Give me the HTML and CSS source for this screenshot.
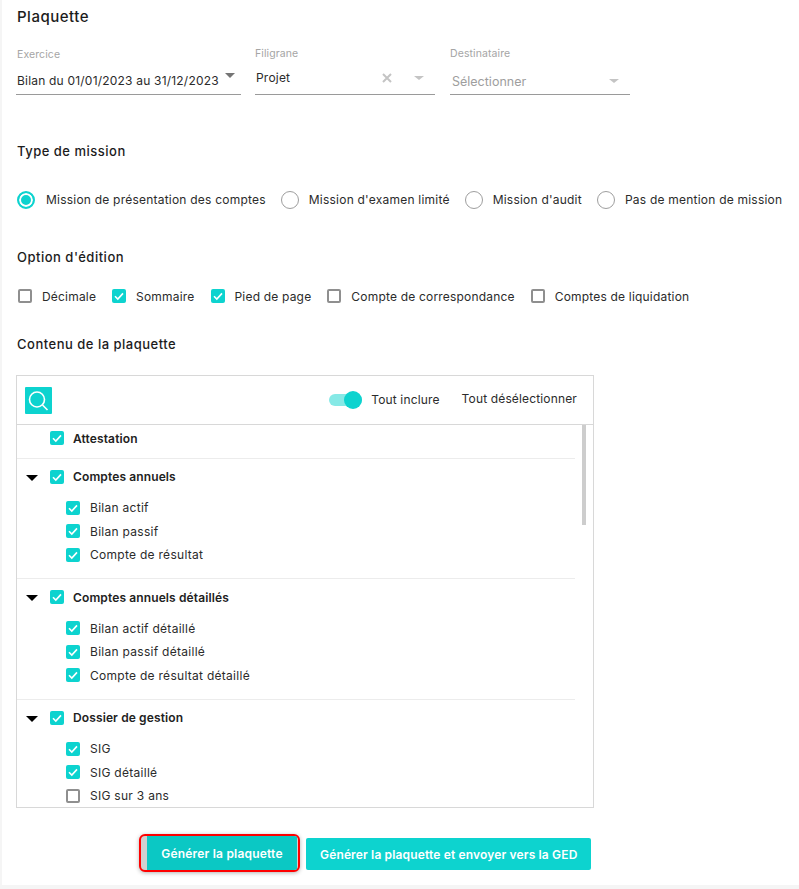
FILE: index.html
```html
<!DOCTYPE html>
<html lang="fr">
<head>
<meta charset="utf-8">
<title>Plaquette</title>
<link rel="stylesheet" href="styles.css">
</head>
<body>
<main class="page">
  <h1 class="title">Plaquette</h1>

  <div class="fields">
    <div class="field field-year">
      <span class="field-label">Exercice</span>
      <div class="field-control">
        <span class="field-value">Bilan du 01/01/2023 au 31/12/2023</span>
        <span class="caret caret-dark"></span>
      </div>
    </div>
    <div class="field field-wm">
      <span class="field-label">Filigrane</span>
      <div class="field-control">
        <span class="field-value">Projet</span>
        <svg class="clear" viewBox="0 0 10 10" width="10" height="10"><path d="M1 1L9 9M9 1L1 9" stroke="#c4c4c4" stroke-width="2" fill="none"/></svg>
        <span class="caret caret-light"></span>
      </div>
    </div>
    <div class="field field-dest">
      <span class="field-label">Destinataire</span>
      <div class="field-control">
        <span class="field-placeholder">Sélectionner</span>
        <span class="caret caret-light"></span>
      </div>
    </div>
  </div>

  <h2 class="section section-mission">Type de mission</h2>
  <div class="radios">
    <label class="radio"><span class="radio-dot is-on"></span>Mission de présentation des comptes</label>
    <label class="radio"><span class="radio-dot"></span>Mission d'examen limité</label>
    <label class="radio"><span class="radio-dot"></span>Mission d'audit</label>
    <label class="radio"><span class="radio-dot"></span>Pas de mention de mission</label>
  </div>

  <h2 class="section section-option">Option d'édition</h2>
  <div class="options">
    <label class="option"><span class="check"></span>Décimale</label>
    <label class="option"><span class="check is-on"><svg viewBox="0 0 14 14"><path d="M3 7.2L5.8 10L11 4.4"/></svg></span>Sommaire</label>
    <label class="option"><span class="check is-on"><svg viewBox="0 0 14 14"><path d="M3 7.2L5.8 10L11 4.4"/></svg></span>Pied de page</label>
    <label class="option"><span class="check"></span>Compte de correspondance</label>
    <label class="option"><span class="check"></span>Comptes de liquidation</label>
  </div>

  <h2 class="section section-content">Contenu de la plaquette</h2>
  <section class="panel">
    <header class="panel-head">
      <button class="search" type="button" aria-label="Rechercher">
        <svg viewBox="0 0 27 27" width="27" height="27"><circle cx="12" cy="12.5" r="7.5" fill="none" stroke="#fff" stroke-width="1.6"/><path d="M17.5 18L22.5 23" stroke="#fff" stroke-width="1.6" fill="none"/></svg>
      </button>
      <span class="toggle"><span class="toggle-knob"></span></span>
      <span class="include">Tout inclure</span>
      <span class="deselect">Tout désélectionner</span>
    </header>
    <div class="tree">
      <div class="scrollbar"></div>
      <div class="tree-top">
        <span class="check is-on"><svg viewBox="0 0 14 14"><path d="M3 7.2L5.8 10L11 4.4"/></svg></span>
        <span class="node-name">Attestation</span>
      </div>
      <div class="group">
        <div class="group-head">
          <span class="arrow"></span>
          <span class="check is-on"><svg viewBox="0 0 14 14"><path d="M3 7.2L5.8 10L11 4.4"/></svg></span>
          <span class="node-name">Comptes annuels</span>
        </div>
        <div class="leaf"><span class="check is-on"><svg viewBox="0 0 14 14"><path d="M3 7.2L5.8 10L11 4.4"/></svg></span>Bilan actif</div>
        <div class="leaf"><span class="check is-on"><svg viewBox="0 0 14 14"><path d="M3 7.2L5.8 10L11 4.4"/></svg></span>Bilan passif</div>
        <div class="leaf"><span class="check is-on"><svg viewBox="0 0 14 14"><path d="M3 7.2L5.8 10L11 4.4"/></svg></span>Compte de résultat</div>
      </div>
      <div class="group">
        <div class="group-head">
          <span class="arrow"></span>
          <span class="check is-on"><svg viewBox="0 0 14 14"><path d="M3 7.2L5.8 10L11 4.4"/></svg></span>
          <span class="node-name">Comptes annuels détaillés</span>
        </div>
        <div class="leaf"><span class="check is-on"><svg viewBox="0 0 14 14"><path d="M3 7.2L5.8 10L11 4.4"/></svg></span>Bilan actif détaillé</div>
        <div class="leaf"><span class="check is-on"><svg viewBox="0 0 14 14"><path d="M3 7.2L5.8 10L11 4.4"/></svg></span>Bilan passif détaillé</div>
        <div class="leaf"><span class="check is-on"><svg viewBox="0 0 14 14"><path d="M3 7.2L5.8 10L11 4.4"/></svg></span>Compte de résultat détaillé</div>
      </div>
      <div class="group group-last">
        <div class="group-head">
          <span class="arrow"></span>
          <span class="check is-on"><svg viewBox="0 0 14 14"><path d="M3 7.2L5.8 10L11 4.4"/></svg></span>
          <span class="node-name">Dossier de gestion</span>
        </div>
        <div class="leaf"><span class="check is-on"><svg viewBox="0 0 14 14"><path d="M3 7.2L5.8 10L11 4.4"/></svg></span>SIG</div>
        <div class="leaf"><span class="check is-on"><svg viewBox="0 0 14 14"><path d="M3 7.2L5.8 10L11 4.4"/></svg></span>SIG détaillé</div>
        <div class="leaf"><span class="check"></span>SIG sur 3 ans</div>
      </div>
    </div>
  </section>

  <div class="actions">
    <span class="focus-ring"><button class="btn btn-primary" type="button">Générer la plaquette</button></span>
    <button class="btn btn-send" type="button">Générer la plaquette et envoyer vers la GED</button>
  </div>
</main>
</body>
</html>
```

FILE: styles.css
```css
* { box-sizing: border-box; }
html, body { margin: 0; padding: 0; }
body {
  width: 799px;
  height: 889px;
  overflow: hidden;
  background: #f5f5f5;
  font-family: Inter, "Liberation Sans", sans-serif;
  color: #2b2b2b;
  font-size: 12px;
  letter-spacing: 0.2px;
}
.page {
  margin-left: 2px;
  height: 885px;
  padding: 0 0 0 14px;
  background: #fff;
  overflow: hidden;
}
.title {
  margin: 0 0 0 1px;
  padding-top: 8px;
  height: 47px;
  font-size: 15px;
  line-height: 18px;
  font-weight: 500;
  letter-spacing: 0.5px;
  color: #1c1c1c;
}
.section {
  margin: 0 0 0 1px;
  font-size: 13px;
  line-height: 16px;
  font-weight: 500;
  letter-spacing: 0.5px;
  color: #1c1c1c;
}
.fields { display: flex; height: 96px; }
.field { display: flex; flex-direction: column; }
.field-year { width: 225px; margin-right: 14px; }
.field-wm { width: 180px; margin-right: 15px; }
.field-dest { width: 180px; }
.field-label {
  font-size: 10.5px;
  line-height: 14px;
  letter-spacing: 0.1px;
  color: #a5a5a5;
}
.field-year .field-label { margin-top: 1px; padding-left: 1px; }
.field-control {
  display: flex;
  align-items: center;
  height: 33px;
  border-bottom: 1px solid #9a9a9a;
  font-size: 12px;
}
.field-wm .field-control, .field-dest .field-control { margin-top: 1px; }
.field-year .field-control { margin-top: 0; height: 33px; padding: 4px 0 0 1px; }
.field-wm .field-control { padding: 4px 0 6px 1px; }
.field-dest .field-control { padding-top: 4px; }
.field-value { flex: 1; white-space: nowrap; color: #2b2b2b; }
.field-placeholder { flex: 1; padding: 3px 0 0 2px; font-size: 12.5px; letter-spacing: 0; color: #9e9e9e; }
.caret {
  width: 0;
  height: 0;
  border-left: 5px solid transparent;
  border-right: 5px solid transparent;
}
.caret-dark { border-top: 5px solid #757575; margin: 0 6px 10px 0; }
.caret-light { border-top: 4px solid #c4c4c4; margin: 1px 11px 0 0; }
.clear { margin-right: 22px; margin-top: 2px; }
.radios { display: flex; margin-top: 31px; height: 19px; }
.radio {
  display: flex;
  align-items: center;
  white-space: nowrap;
  letter-spacing: 0.22px;
  margin-right: 15px;
}
.radio-dot {
  width: 18px;
  height: 18px;
  border: 1.5px solid #9e9e9e;
  border-radius: 50%;
  margin-right: 10px;
  background: #fff;
  flex: none;
}
.radio-dot.is-on { border: 2px solid #0dd3cf; background: #0dd3cf; box-shadow: inset 0 0 0 2px #fff; margin: 0 11px 0 1px; }
.section-option { margin-top: 40px; }
.options { display: flex; margin-top: 22px; height: 18px; }
.option {
  display: flex;
  align-items: center;
  white-space: nowrap;
  margin-right: 14px;
  padding-left: 2px;
  letter-spacing: 0.19px;
}
.check {
  width: 14px;
  height: 14px;
  border: 2px solid #8f8f8f;
  border-radius: 2px;
  background: #fff;
  margin-right: 9px;
  flex: none;
  display: inline-flex;
}
.option .check, .leaf .check { margin-right: 10px; }
.check.is-on { border: none; background: #0dd3cf; }
.check svg { width: 14px; height: 14px; }
.check svg path { fill: none; stroke: #fff; stroke-width: 1.6; }
.section-content { margin-top: 31px; }
.panel {
  margin-top: 23px;
  width: 578px;
  height: 433px;
  border: 1px solid #d8d8d8;
  display: flex;
  flex-direction: column;
  overflow: hidden;
}
.panel-head {
  height: 49px;
  flex: none;
  display: flex;
  align-items: center;
  padding: 0 16px 0 8px;
  border-bottom: 1px solid #d8d8d8;
  letter-spacing: 0.15px;
}
.search {
  width: 27px;
  height: 27px;
  padding: 0;
  border: 0;
  border-radius: 1px;
  background: #0dd3cf;
  display: block;
  margin-right: auto;
}
.toggle {
  position: relative;
  width: 33px;
  height: 12px;
  border-radius: 6px;
  background: #86e9e6;
  margin-right: 9px;
}
.toggle-knob {
  position: absolute;
  right: 0;
  top: -3px;
  width: 18px;
  height: 18px;
  border-radius: 50%;
  background: #0dd3cf;
}
.include { margin: 0 22px 1px 0; }
.deselect { margin-bottom: 3px; }
.tree { position: relative; flex: 1; overflow: hidden; padding-right: 18px; }
.scrollbar {
  position: absolute;
  right: 7px;
  top: 0;
  width: 4px;
  height: 100px;
  background: #cdcdcd;
}
.tree-top {
  display: flex;
  align-items: center;
  height: 33.75px;
  padding: 0 0 6px 33px;
  border-bottom: 1px solid #ececec;
}
.node-name { font-weight: 600; color: #222; letter-spacing: 0.12px; }
.group { height: 120.5px; border-bottom: 1px solid #ececec; padding-top: 8px; }
.group-last { border-bottom: 0; }
.group-head { display: flex; align-items: center; height: 20px; margin-bottom: 9px; position: relative; padding-left: 33px; }
.arrow {
  position: absolute;
  left: 9px;
  top: 8px;
  width: 0;
  height: 0;
  border-left: 6px solid transparent;
  border-right: 6px solid transparent;
  border-top: 6px solid #000;
}
.leaf { display: flex; align-items: center; height: 23.5px; padding-left: 49px; letter-spacing: 0.28px; }
.actions { display: flex; margin: 26px 0 0 123px; gap: 6px; align-items: center; }
.focus-ring {
  display: inline-flex;
  width: 161px;
  height: 38px;
  border: 2px solid #f00;
  border-radius: 6px;
  padding: 0 1px 0 6px;
  background: #d0d0d0;
  box-shadow: 0 1px 4px rgba(0,0,0,.3);
  overflow: hidden;
}
.btn {
  height: 32px;
  border: 0;
  border-radius: 2px;
  padding: 0 14px;
  background: #0dd3cf;
  color: #fff;
  font: 600 12px Inter, "Liberation Sans", sans-serif;
  letter-spacing: 0.2px;
  white-space: nowrap;
}
.btn-send { margin-top: 2px; letter-spacing: 0.15px; }
.btn-primary { width: 152px; height: 34px; background: #0bc8c4; border-radius: 0; padding: 0; }
```
